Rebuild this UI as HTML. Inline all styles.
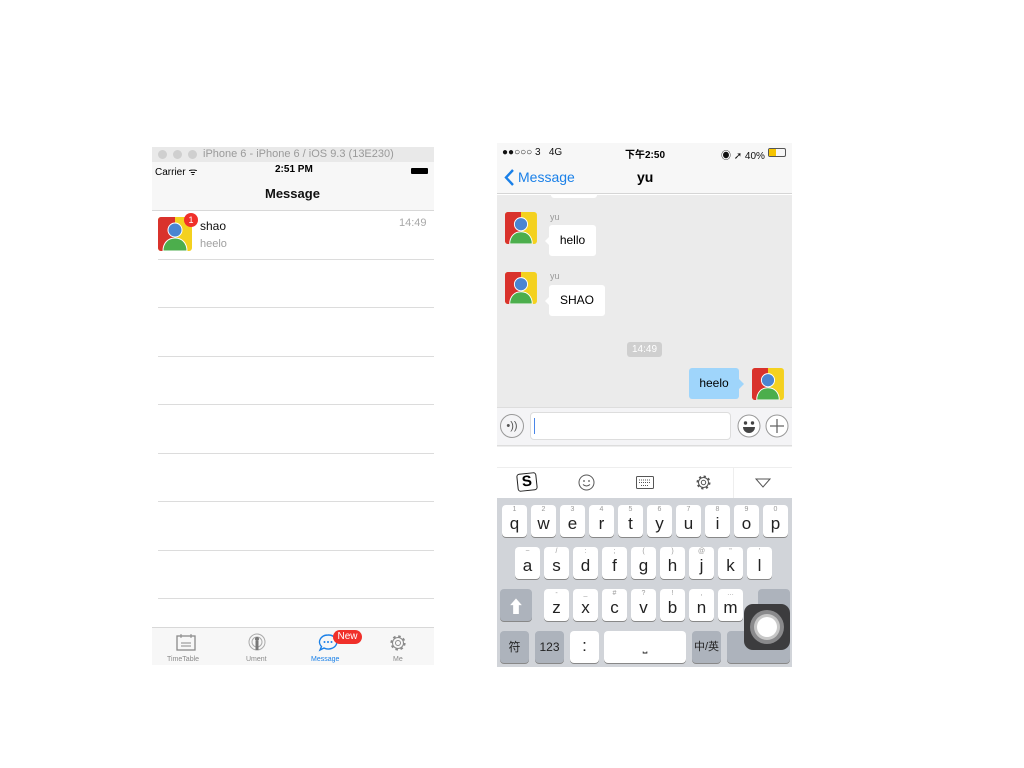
<!DOCTYPE html>
<html><head><meta charset="utf-8"><style>
*{margin:0;padding:0;box-sizing:border-box}
body{width:1024px;height:768px;background:#fff;position:relative;font-family:"Liberation Sans","Noto Sans CJK SC",sans-serif;overflow:hidden}
.a{position:absolute}
.sep{position:absolute;left:158px;width:276px;height:1px;background:#dcdcdc}
.k{position:absolute;background:#fff;border-radius:4px;box-shadow:0 1px 0 #888;width:25px;height:32px;text-align:center;font-size:17px;color:#222;line-height:37px}
.k small{position:absolute;top:1px;left:0;right:0;font-size:7px;line-height:8px;color:#999}
.g{background:#adb3bc}
</style></head><body>
<svg width="0" height="0" style="position:absolute"><defs>
<g id="av"><rect width="34" height="34" rx="3" fill="#f4d11f"/><path d="M3 0h14v34H3a3 3 0 0 1-3-3V3a3 3 0 0 1 3-3z" fill="#d9322c"/><circle cx="17" cy="13" r="7" fill="#4a85d1" stroke="#fff" stroke-width="1"/><path d="M5 34c0-8 5-13 12-13s12 5 12 13z" fill="#4cae4c" stroke="#fff" stroke-width="1"/></g>
</defs></svg>

<!-- LEFT PHONE -->
<div class="a" style="left:152px;top:147px;width:282px;height:15px;background:#e9e9e9"></div>
<div class="a" style="left:158px;top:150px;width:9px;height:9px;border-radius:50%;background:#cfcfcf"></div>
<div class="a" style="left:173px;top:150px;width:9px;height:9px;border-radius:50%;background:#cfcfcf"></div>
<div class="a" style="left:188px;top:150px;width:9px;height:9px;border-radius:50%;background:#cfcfcf"></div>
<div class="a" style="left:203px;top:148px;font-size:11px;color:#9a9a9a">iPhone 6 - iPhone 6 / iOS 9.3 (13E230)</div>
<div class="a" style="left:152px;top:162px;width:282px;height:49px;background:#f7f7f7;border-bottom:1px solid #d8d8d8"></div>
<div class="a" style="left:155px;top:164px;font-size:10px;color:#000">Carrier ᯤ</div>
<div class="a" style="left:275px;top:164px;font-size:10px;font-weight:bold">2:51 PM</div>
<div class="a" style="left:411px;top:168px;width:17px;height:6px;background:#000;border-radius:1px"></div>
<div class="a" style="left:265px;top:186px;font-size:13px;font-weight:bold;color:#111">Message</div>
<svg class="a" style="left:158px;top:217px" width="34" height="35"><use href="#av"/></svg>
<div class="a" style="left:184px;top:213px;width:14px;height:14px;border-radius:50%;background:#f0302a;color:#fff;font-size:9px;text-align:center;line-height:14px">1</div>
<div class="a" style="left:200px;top:219px;font-size:12px;color:#111">shao</div>
<div class="a" style="left:200px;top:238px;font-size:11px;color:#a0a0a0">heelo</div>
<div class="a" style="left:399px;top:217px;font-size:11px;color:#a8a8a8">14:49</div>
<div class="sep" style="top:259px"></div><div class="sep" style="top:307px"></div><div class="sep" style="top:356px"></div><div class="sep" style="top:404px"></div><div class="sep" style="top:453px"></div><div class="sep" style="top:501px"></div><div class="sep" style="top:550px"></div><div class="sep" style="top:598px"></div>
<div class="a" style="left:152px;top:627px;width:282px;height:38px;background:#f7f7f7;border-top:1px solid #d8d8d8"></div>
<svg class="a" style="left:176px;top:633px" width="20" height="18"><rect x="1" y="3" width="18" height="14" fill="none" stroke="#8a8a8a" stroke-width="1.3"/><line x1="5" y1="1" x2="5" y2="5" stroke="#8a8a8a"/><line x1="15" y1="1" x2="15" y2="5" stroke="#8a8a8a"/><line x1="5" y1="10" x2="15" y2="10" stroke="#8a8a8a"/><line x1="5" y1="13" x2="15" y2="13" stroke="#8a8a8a"/></svg>
<svg class="a" style="left:248px;top:633px" width="18" height="18"><circle cx="9" cy="9" r="8" fill="none" stroke="#aaa"/><circle cx="9" cy="9" r="5" fill="none" stroke="#aaa"/><circle cx="9" cy="6" r="2" fill="#777"/><rect x="7.5" y="8" width="3" height="9" fill="#777"/></svg>
<svg class="a" style="left:318px;top:634px" width="20" height="18"><path d="M10 1a8.5 7 0 1 1-4 13l-4 2 1.5-3.5A8.5 7 0 0 1 10 1z" fill="none" stroke="#1a80e8" stroke-width="1.4"/><circle cx="6.5" cy="8" r="1" fill="#1a80e8"/><circle cx="10" cy="8" r="1" fill="#1a80e8"/><circle cx="13.5" cy="8" r="1" fill="#1a80e8"/></svg>
<div class="a" style="left:333px;top:630px;width:29px;height:14px;border-radius:7px;background:#f0302a;color:#fff;font-size:10px;text-align:center;line-height:14px">New</div>
<svg class="a" style="left:389px;top:634px" width="18" height="18"><circle cx="9" cy="9" r="6.5" fill="none" stroke="#8a8a8a" stroke-width="2.2" stroke-dasharray="2.5 2.6"/><circle cx="9" cy="9" r="5.5" fill="none" stroke="#8a8a8a"/><circle cx="9" cy="9" r="2.5" fill="none" stroke="#8a8a8a"/></svg>
<div class="a" style="left:167px;top:656px;font-size:7px;color:#8a8a8a">TimeTable</div>
<div class="a" style="left:246px;top:656px;font-size:7px;color:#8a8a8a">Ument</div>
<div class="a" style="left:311px;top:656px;font-size:7px;color:#1a80e8">Message</div>
<div class="a" style="left:393px;top:656px;font-size:7px;color:#8a8a8a">Me</div>

<!-- RIGHT PHONE -->
<div class="a" style="left:497px;top:143px;width:295px;height:51px;background:#f7f7f7;border-bottom:1px solid #d5d5d5"></div>
<div class="a" style="left:502px;top:147px;font-size:10px;color:#111">●●○○○ 3&nbsp;&nbsp; 4G</div>
<div class="a" style="left:625px;top:146px;font-size:10px;font-weight:bold">下午2:50</div>
<div class="a" style="left:721px;top:147px;font-size:10px;color:#111">◉ ➚ 40%</div>
<div class="a" style="left:768px;top:148px;width:18px;height:9px;border:1px solid #555;border-radius:2px"><div style="width:7px;height:7px;background:#f5c400"></div></div>
<svg class="a" style="left:503px;top:169px" width="12" height="17"><path d="M10 1L3 8.5 10 16" fill="none" stroke="#1a80e8" stroke-width="2.4"/></svg>
<div class="a" style="left:518px;top:169px;font-size:14px;color:#1a80e8">Message</div>
<div class="a" style="left:637px;top:169px;font-size:14px;font-weight:bold">yu</div>
<div class="a" style="left:497px;top:195px;width:295px;height:212px;background:#ebebeb"></div>
<div class="a" style="left:551px;top:195px;width:46px;height:3px;background:#fff;border-radius:0 0 3px 3px"></div>
<svg class="a" style="left:505px;top:212px" width="32" height="32"><use href="#av" transform="scale(0.94)"/></svg>
<div class="a" style="left:550px;top:212px;font-size:9px;color:#999">yu</div>
<div class="a" style="left:549px;top:225px;width:47px;height:31px;background:#fff;border-radius:3px;font-size:12px;line-height:31px;text-align:center">hello</div>
<div class="a" style="left:545px;top:236px;width:0;height:0;border:5px solid transparent;border-right-color:#fff;border-left:0"></div>
<svg class="a" style="left:505px;top:272px" width="32" height="32"><use href="#av" transform="scale(0.94)"/></svg>
<div class="a" style="left:550px;top:271px;font-size:9px;color:#999">yu</div>
<div class="a" style="left:549px;top:285px;width:56px;height:31px;background:#fff;border-radius:3px;font-size:12px;line-height:31px;text-align:center">SHAO</div>
<div class="a" style="left:545px;top:296px;width:0;height:0;border:5px solid transparent;border-right-color:#fff;border-left:0"></div>
<div class="a" style="left:627px;top:342px;width:35px;height:15px;background:#cfcfcf;border-radius:3px;color:#fff;font-size:10px;text-align:center;line-height:15px">14:49</div>
<div class="a" style="left:689px;top:368px;width:50px;height:31px;background:#9fd5fb;border-radius:3px;font-size:12px;line-height:31px;text-align:center">heelo</div>
<div class="a" style="left:739px;top:379px;width:0;height:0;border:5px solid transparent;border-left-color:#9fd5fb;border-right:0"></div>
<svg class="a" style="left:752px;top:368px" width="32" height="32"><use href="#av" transform="scale(0.94)"/></svg>
<div class="a" style="left:497px;top:407px;width:295px;height:39px;background:#f4f4f6;border-top:1px solid #ddd;border-bottom:1px solid #ddd"></div>
<div class="a" style="left:500px;top:414px;width:24px;height:24px;border-radius:50%;border:1px solid #999;font-size:11px;text-align:center;line-height:22px;color:#555">•))</div>
<div class="a" style="left:530px;top:412px;width:201px;height:28px;background:#fff;border:1px solid #ddd;border-radius:4px"></div>
<div class="a" style="left:534px;top:418px;width:1px;height:16px;background:#4a86e8"></div>
<svg class="a" style="left:737px;top:414px" width="24" height="24"><circle cx="12" cy="12" r="11" fill="#fff" stroke="#999"/><circle cx="8.5" cy="9" r="1.7" fill="#444"/><circle cx="15.5" cy="9" r="1.7" fill="#444"/><path d="M6 13h12a6 6 0 0 1-12 0z" fill="#444"/></svg>
<svg class="a" style="left:765px;top:414px" width="24" height="24"><circle cx="12" cy="12" r="11" fill="#fff" stroke="#999"/><path d="M12 5v14M5 12h14" stroke="#666" stroke-width="1.3"/></svg>
<div class="a" style="left:497px;top:446px;width:295px;height:52px;background:#fff;border-top:1px solid #eee"></div>
<div class="a" style="left:497px;top:467px;width:295px;height:1px;background:#eee"></div>
<div class="a" style="left:733px;top:468px;width:1px;height:30px;background:#eee"></div>
<div class="a" style="left:517px;top:473px;width:20px;height:18px;border:1.5px solid #222;border-radius:3px;transform:rotate(-6deg);font-weight:bold;font-size:15px;line-height:16px;text-align:center">S</div>
<svg class="a" style="left:578px;top:474px" width="17" height="17"><circle cx="8.5" cy="8.5" r="7.5" fill="none" stroke="#555"/><circle cx="6" cy="7" r="0.9" fill="#555"/><circle cx="11" cy="7" r="0.9" fill="#555"/><path d="M5 10.5q3.5 3 7 0" fill="none" stroke="#555"/></svg>
<svg class="a" style="left:636px;top:476px" width="18" height="13"><rect x="0.5" y="0.5" width="17" height="12" rx="1" fill="none" stroke="#555"/><path d="M3 4h12M3 6.5h12M5 9.5h8" stroke="#555" stroke-dasharray="1 1"/></svg>
<svg class="a" style="left:695px;top:474px" width="17" height="17"><circle cx="8.5" cy="8.5" r="6" fill="none" stroke="#555" stroke-width="2" stroke-dasharray="2.2 2.5"/><circle cx="8.5" cy="8.5" r="5" fill="none" stroke="#555"/><circle cx="8.5" cy="8.5" r="2.2" fill="none" stroke="#555"/></svg>
<svg class="a" style="left:755px;top:478px" width="16" height="10"><path d="M1 1h14L8 9z" fill="none" stroke="#555"/></svg>
<div class="a" style="left:497px;top:498px;width:295px;height:169px;background:#d1d4d9"></div>
<div class="k" style="left:502px;top:505px"><small>1</small>q</div>
<div class="k" style="left:531px;top:505px"><small>2</small>w</div>
<div class="k" style="left:560px;top:505px"><small>3</small>e</div>
<div class="k" style="left:589px;top:505px"><small>4</small>r</div>
<div class="k" style="left:618px;top:505px"><small>5</small>t</div>
<div class="k" style="left:647px;top:505px"><small>6</small>y</div>
<div class="k" style="left:676px;top:505px"><small>7</small>u</div>
<div class="k" style="left:705px;top:505px"><small>8</small>i</div>
<div class="k" style="left:734px;top:505px"><small>9</small>o</div>
<div class="k" style="left:763px;top:505px"><small>0</small>p</div>
<div class="k" style="left:515px;top:547px"><small>~</small>a</div>
<div class="k" style="left:544px;top:547px"><small>/</small>s</div>
<div class="k" style="left:573px;top:547px"><small>:</small>d</div>
<div class="k" style="left:602px;top:547px"><small>;</small>f</div>
<div class="k" style="left:631px;top:547px"><small>(</small>g</div>
<div class="k" style="left:660px;top:547px"><small>)</small>h</div>
<div class="k" style="left:689px;top:547px"><small>@</small>j</div>
<div class="k" style="left:718px;top:547px"><small>"</small>k</div>
<div class="k" style="left:747px;top:547px"><small>'</small>l</div>
<div class="k g" style="left:500px;top:589px;width:32px;color:#fff">⬆</div>
<div class="k" style="left:544px;top:589px"><small>-</small>z</div>
<div class="k" style="left:573px;top:589px"><small>_</small>x</div>
<div class="k" style="left:602px;top:589px"><small>#</small>c</div>
<div class="k" style="left:631px;top:589px"><small>?</small>v</div>
<div class="k" style="left:660px;top:589px"><small>!</small>b</div>
<div class="k" style="left:689px;top:589px"><small>,</small>n</div>
<div class="k" style="left:718px;top:589px"><small>…</small>m</div>
<div class="k g" style="left:758px;top:589px;width:32px"></div>
<div class="k g" style="left:500px;top:631px;width:29px;font-size:12px;line-height:32px">符</div>
<div class="k g" style="left:535px;top:631px;width:29px;font-size:12px;line-height:32px">123</div>
<div class="k" style="left:570px;top:631px;width:29px;line-height:30px">:</div>
<div class="k" style="left:604px;top:631px;width:82px;font-size:12px;line-height:32px">⎵</div>
<div class="k g" style="left:692px;top:631px;width:29px;font-size:11px;line-height:32px">中/英</div>
<div class="k g" style="left:727px;top:631px;width:63px"></div>
<div class="a" style="left:744px;top:604px;width:46px;height:46px;background:#3c3c3e;border-radius:9px"></div>
<div class="a" style="left:750px;top:610px;width:34px;height:34px;border-radius:50%;background:#8a8a8c"></div>
<div class="a" style="left:754px;top:614px;width:26px;height:26px;border-radius:50%;background:#c8c8c8"></div>
<div class="a" style="left:757px;top:617px;width:20px;height:20px;border-radius:50%;background:#fff"></div>
</body></html>
